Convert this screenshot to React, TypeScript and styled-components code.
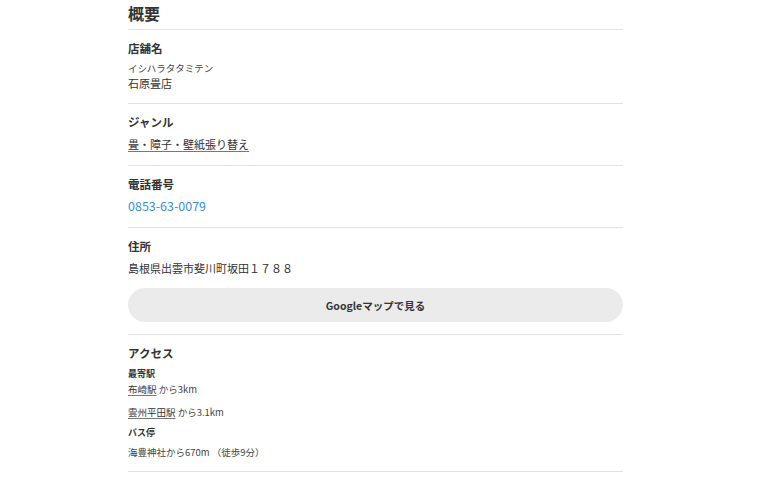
import React from "react";
import styled, { createGlobalStyle } from "styled-components";

const Global = createGlobalStyle`
  html, body {
    margin: 0;
    padding: 0;
    background: #ffffff;
  }
  body {
    font-family: "Noto Sans CJK JP", "Noto Sans", sans-serif;
    color: #333333;
    -webkit-font-smoothing: antialiased;
  }
`;

const Page = styled.main`
  width: 495px;
  margin-left: 128px;
`;

const Heading = styled.h2`
  margin: 0;
  padding: 1px 0 4px;
  font-size: 16px;
  line-height: 24px;
  font-weight: 700;
  color: #333;
  border-bottom: 1px solid #e2e2e2;
`;

const Section = styled.section<{ $pb?: number }>`
  padding: 10px 0 ${(p) => p.$pb ?? 12}px;
  border-bottom: 1px solid #e2e2e2;
  display: flex;
  flex-direction: column;
`;

const Label = styled.h3`
  margin: 0;
  font-size: 11.5px;
  line-height: 16px;
  font-weight: 700;
  color: #333;
`;

const Value = styled.div<{ $mt?: number }>`
  margin-top: ${(p) => p.$mt ?? 5}px;
  font-size: 11px;
  line-height: 18px;
  color: #333;
`;

const Kana = styled.div`
  margin-top: 6px;
  font-size: 9.5px;
  line-height: 13px;
  color: #444;
`;

const Name = styled.div`
  font-size: 11px;
  line-height: 16px;
  color: #333;
`;

const TextLink = styled.a`
  color: #333;
  text-decoration: underline;
  text-decoration-color: #777;
  text-underline-offset: 2px;
`;

const Phone = styled.a`
  color: #3a8fd8;
  text-decoration: none;
  font-size: 12.5px;
`;

const MapButton = styled.button`
  margin-top: 11px;
  height: 34px;
  width: 100%;
  border: none;
  border-radius: 17px;
  background: #ebebeb;
  font-family: inherit;
  font-size: 10.5px;
  font-weight: 700;
  color: #333;
  cursor: pointer;
`;

const SubLabel = styled.h4<{ $mt: number }>`
  margin: ${(p) => p.$mt}px 0 0;
  font-size: 9px;
  line-height: 13px;
  font-weight: 700;
  color: #333;
`;

const AccessRow = styled.div<{ $mt: number }>`
  margin-top: ${(p) => p.$mt}px;
  font-size: 9.5px;
  line-height: 15px;
  color: #444;
`;

const stations = [
  { name: "布崎駅", dist: "から3km" },
  { name: "雲州平田駅", dist: "から3.1km" },
];

export default function App() {
  return (
    <>
      <Global />
      <Page>
        <Heading>概要</Heading>

        <Section>
          <Label>店舗名</Label>
          <Kana>イシハラタタミテン</Kana>
          <Name>石原畳店</Name>
        </Section>

        <Section>
          <Label>ジャンル</Label>
          <Value>
            <TextLink href="#">畳・障子・壁紙張り替え</TextLink>
          </Value>
        </Section>

        <Section>
          <Label>電話番号</Label>
          <Value>
            <Phone href="#">0853-63-0079</Phone>
          </Value>
        </Section>

        <Section>
          <Label>住所</Label>
          <Value>島根県出雲市斐川町坂田１７８８</Value>
          <MapButton type="button">Googleマップで見る</MapButton>
        </Section>

        <Section $pb={11}>
          <Label>アクセス</Label>
          <SubLabel $mt={6}>最寄駅</SubLabel>
          {stations.map((s, i) => (
            <AccessRow key={s.name} $mt={i === 0 ? 2 : 8}>
              <TextLink href="#">{s.name}</TextLink> {s.dist}
            </AccessRow>
          ))}
          <SubLabel $mt={6}>バス停</SubLabel>
          <AccessRow $mt={6}>海豊神社から670m （徒歩9分）</AccessRow>
        </Section>
      </Page>
    </>
  );
}
